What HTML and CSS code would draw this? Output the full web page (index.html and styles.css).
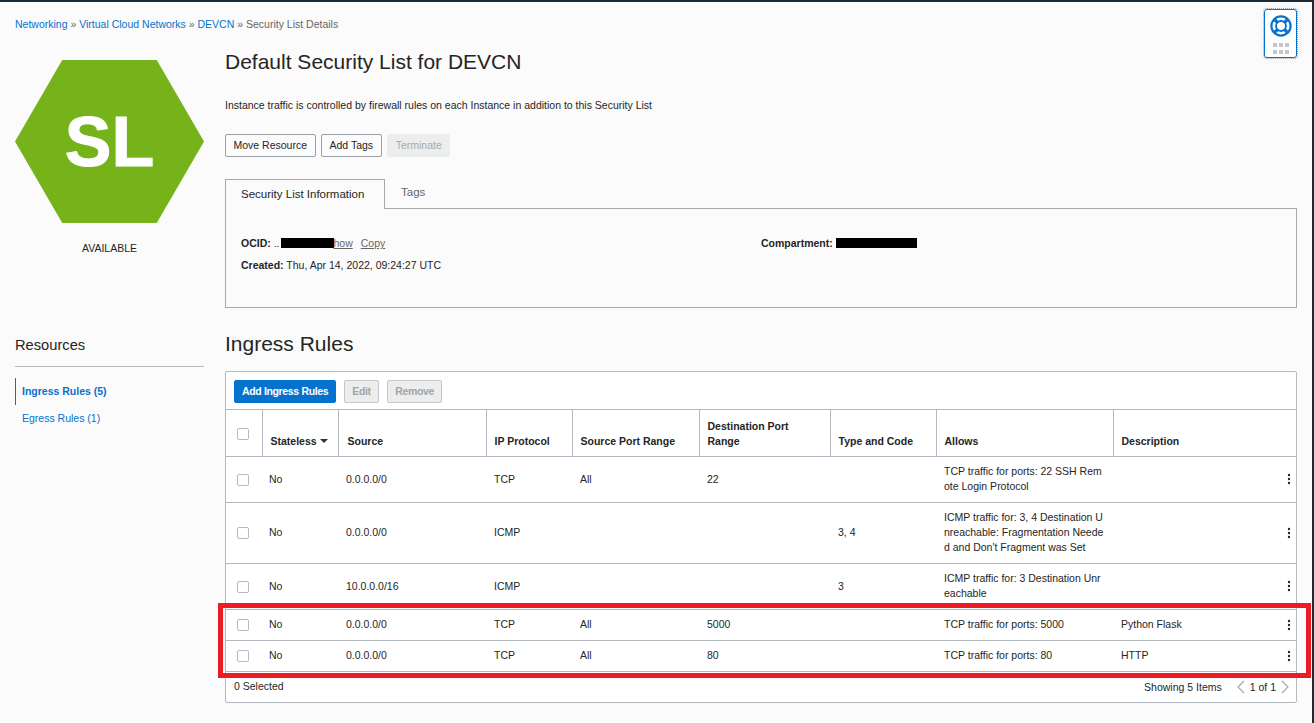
FILE: index.html
```html
<!DOCTYPE html>
<html>
<head>
  <meta charset="UTF-8">
  <title>Default Security List for DEVCN</title>
  <link rel="stylesheet" href="styles.css">
</head>
<body>
  <div class="frame">
    <div class="crumbs">
      <a href="#">Networking</a> <span class="sep">»</span>
      <a href="#">Virtual Cloud Networks</a> <span class="sep">»</span>
      <a href="#">DEVCN</a> <span class="sep">»</span>
      <span class="sep">Security List Details</span>
    </div>

    <div class="layout">
      <div class="side">
        <div class="hex">SL</div>
        <div class="state">AVAILABLE</div>
        <h3 class="side-title">Resources</h3>
        <a class="side-link active" href="#">Ingress Rules (5)</a>
        <a class="side-link" href="#">Egress Rules (1)</a>
      </div>

      <div class="main">
        <h1>Default Security List for DEVCN</h1>
        <p class="note">Instance traffic is controlled by firewall rules on each Instance in addition to this Security List</p>
        <div class="actions">
          <button class="btn">Move Resource</button>
          <button class="btn">Add Tags</button>
          <button class="btn disabled-flat">Terminate</button>
        </div>

        <div class="tabs">
          <div class="tab current">Security List Information</div>
          <div class="tab">Tags</div>
        </div>
        <div class="panel">
          <div class="info-col">
            <div class="info-line"><b>OCID:</b> ..<span class="redact short"></span><a class="minor" href="#">how</a><a class="minor copy" href="#">Copy</a></div>
            <div class="info-line"><b>Created:</b> Thu, Apr 14, 2022, 09:24:27 UTC</div>
          </div>
          <div class="info-col">
            <div class="info-line"><b>Compartment:</b> <span class="redact long"></span></div>
          </div>
        </div>

        <h2>Ingress Rules</h2>
        <div class="card">
          <div class="toolbar">
            <button class="btn primary">Add Ingress Rules</button>
            <button class="btn off">Edit</button>
            <button class="btn off">Remove</button>
          </div>
          <table>
            <colgroup>
              <col class="c-check"><col class="c-state"><col class="c-source"><col class="c-proto">
              <col class="c-sport"><col class="c-dport"><col class="c-type"><col class="c-allows">
              <col class="c-desc"><col class="c-menu">
            </colgroup>
            <thead>
              <tr>
                <th class="top-check"><span class="check"></span></th>
                <th>Stateless <span class="caret"></span></th>
                <th class="th-source">Source</th>
                <th>IP Protocol</th>
                <th>Source Port Range</th>
                <th>Destination Port Range</th>
                <th>Type and Code</th>
                <th>Allows</th>
                <th colspan="2">Description</th>
              </tr>
            </thead>
            <tbody>
              <tr class="r46">
                <td><span class="check"></span></td><td class="td-no">No</td><td>0.0.0.0/0</td><td>TCP</td><td>All</td><td>22</td><td></td>
                <td class="allows">TCP traffic for ports: 22 SSH Rem<br>ote Login Protocol</td><td></td>
                <td><svg class="kebab" viewBox="0 0 4 12"><circle cx="2" cy="2" r="1.2"/><circle cx="2" cy="6" r="1.2"/><circle cx="2" cy="10" r="1.2"/></svg></td>
              </tr>
              <tr class="r61">
                <td><span class="check"></span></td><td class="td-no">No</td><td>0.0.0.0/0</td><td>ICMP</td><td></td><td></td><td>3, 4</td>
                <td class="allows">ICMP traffic for: 3, 4 Destination U<br>nreachable: Fragmentation Neede<br>d and Don't Fragment was Set</td><td></td>
                <td><svg class="kebab" viewBox="0 0 4 12"><circle cx="2" cy="2" r="1.2"/><circle cx="2" cy="6" r="1.2"/><circle cx="2" cy="10" r="1.2"/></svg></td>
              </tr>
              <tr class="r46">
                <td><span class="check"></span></td><td class="td-no">No</td><td>10.0.0.0/16</td><td>ICMP</td><td></td><td></td><td>3</td>
                <td class="allows">ICMP traffic for: 3 Destination Unr<br>eachable</td><td></td>
                <td><svg class="kebab" viewBox="0 0 4 12"><circle cx="2" cy="2" r="1.2"/><circle cx="2" cy="6" r="1.2"/><circle cx="2" cy="10" r="1.2"/></svg></td>
              </tr>
              <tr class="r31">
                <td><span class="check"></span></td><td class="td-no">No</td><td>0.0.0.0/0</td><td>TCP</td><td>All</td><td>5000</td><td></td>
                <td class="allows">TCP traffic for ports: 5000</td><td>Python Flask</td>
                <td><svg class="kebab" viewBox="0 0 4 12"><circle cx="2" cy="2" r="1.2"/><circle cx="2" cy="6" r="1.2"/><circle cx="2" cy="10" r="1.2"/></svg></td>
              </tr>
              <tr class="r31">
                <td><span class="check"></span></td><td class="td-no">No</td><td>0.0.0.0/0</td><td>TCP</td><td>All</td><td>80</td><td></td>
                <td class="allows">TCP traffic for ports: 80</td><td>HTTP</td>
                <td><svg class="kebab" viewBox="0 0 4 12"><circle cx="2" cy="2" r="1.2"/><circle cx="2" cy="6" r="1.2"/><circle cx="2" cy="10" r="1.2"/></svg></td>
              </tr>
            </tbody>
          </table>
          <div class="foot">
            <span>0 Selected</span>
            <div class="pager">
              <span class="items">Showing 5 Items</span>
              <svg class="chev" viewBox="0 0 9 14"><path d="M8 1 2 7l6 6"/></svg>
              <span>1 of 1</span>
              <svg class="chev" viewBox="0 0 9 14"><path d="M1 1l6 6-6 6"/></svg>
            </div>
          </div>
        </div>
      </div>
    </div>

    <div class="help">
      <svg class="buoy" viewBox="0 0 24 24">
        <circle cx="12" cy="12" r="9.6" fill="none" stroke="#0572ce" stroke-width="2.2"/>
        <circle cx="12" cy="12" r="5" fill="none" stroke="#0572ce" stroke-width="1.8"/>
        <path d="M4.6 7 7 4.6l3 3.4L8 10zM19.4 7 17 4.6 14 8l2 2zM4.6 17 7 19.4l3-3.4L8 14zM19.4 17 17 19.4 14 16l2-2z" fill="#0572ce"/>
      </svg>
      <div class="grip"><i></i><i></i><i></i><i></i><i></i><i></i></div>
    </div>
    <div class="mark"></div>
  </div>
</body>
</html>
```

FILE: styles.css
```css
html, body {
  margin: 0;
  padding: 0;
}
body {
  width: 1314px;
  height: 723px;
  overflow: hidden;
  font-family: "Liberation Sans", Arial, sans-serif;
  font-size: 10.5px;
  color: #252525;
  background-color: #fbfbfb;
}
a {
  color: #0572ce;
  text-decoration: none;
}
.frame {
  position: relative;
  box-sizing: border-box;
  height: 723px;
  border-top: 2px solid #1c2a36;
  border-right: 2px solid #1c2a36;
}
.crumbs {
  height: 12px;
  line-height: 12px;
  padding: 16px 0 0 15px;
}
.sep {
  color: #666;
}
.layout {
  display: flex;
  padding-left: 15px;
}

/* left column */
.side {
  width: 189px;
  margin-right: 21px;
  padding-top: 30px;
}
.hex {
  height: 163px;
  display: flex;
  align-items: center;
  justify-content: center;
  background-color: #76b219;
  color: #fff;
  font-size: 70px;
  font-weight: bold;
  -webkit-text-stroke: 1px #fff;
  clip-path: polygon(25% 0, 75% 0, 100% 50%, 75% 100%, 25% 100%, 0 50%);
}
.state {
  margin-top: 19px;
  text-align: center;
  line-height: 12px;
}
.side-title {
  margin: 83px 0 0;
  padding-bottom: 12px;
  border-bottom: 1px solid #b4b9c2;
  font-size: 14.7px;
  font-weight: normal;
  line-height: 17px;
}
.side-link {
  display: block;
  height: 27px;
  line-height: 27px;
  padding-left: 7px;
}
.side-link.active {
  margin-top: 11px;
  border-left: 1px solid #0572ce;
  padding-left: 6px;
  font-weight: bold;
}

/* main column */
.main {
  width: 1072px;
}
h1, h2 {
  margin: 0;
  font-weight: normal;
  font-size: 21px;
}
h1 {
  padding-top: 16px;
  line-height: 32px;
}
.note {
  margin: 0;
  padding-top: 21px;
  line-height: 12px;
}
.actions {
  display: flex;
  gap: 5.5px;
  margin-top: 23px;
}
.btn {
  box-sizing: border-box;
  height: 23px;
  padding: 0 7.5px 1px;
  border: 1px solid #9a9ea6;
  border-radius: 2px;
  background-color: #fbfbfb;
  color: #252525;
  font-family: inherit;
  font-size: 10.5px;
}
.btn.disabled-flat {
  border-color: #eceded;
  background-color: #eceded;
  color: #aaa;
}
.btn.primary {
  padding: 0 7px 1px;
  border-color: #0572ce;
  background-color: #0572ce;
  color: #fff;
  font-weight: bold;
  letter-spacing: -0.35px;
}
.btn.off {
  border-color: #c4c6ca;
  background-color: #eceded;
  color: #a4a4a4;
  font-weight: bold;
  letter-spacing: -0.35px;
}
.tabs {
  display: flex;
  margin-top: 22px;
  height: 30px;
  margin-bottom: -1px;
  position: relative;
}
.tab {
  padding: 0 16px;
  line-height: 26px;
  font-size: 11.5px;
  color: #666;
}
.tab.current {
  width: 128px;
  padding: 0 15px;
  border: 1px solid #a6a9ae;
  border-bottom: 0;
  background-color: #fbfbfb;
  color: #252525;
  line-height: 28px;
}
.panel {
  box-sizing: border-box;
  display: flex;
  height: 100px;
  padding: 23px 15px 0;
  border: 1px solid #a6a9ae;
}
.info-col {
  width: 520px;
}
.info-line {
  height: 22px;
  line-height: 22px;
}
.redact {
  display: inline-block;
  height: 10px;
  background-color: #000;
  vertical-align: -1px;
}
.redact.short {
  width: 53px;
  margin-left: 1px;
}
.redact.long {
  width: 81px;
}
.minor {
  color: #666;
  text-decoration: underline;
}
.copy {
  margin-left: 8px;
}
h2 {
  margin-top: 24px;
  line-height: 24px;
}

/* rules table */
.card {
  box-sizing: border-box;
  height: 332px;
  margin-top: 15px;
  border: 1px solid #b4b9c2;
  border-radius: 2px;
  background-color: #fff;
}
.toolbar {
  display: flex;
  gap: 7.5px;
  height: 38px;
  box-sizing: border-box;
  padding: 8px 8px 0;
  border-bottom: 1px solid #b4b9c2;
}
table {
  width: 100%;
  table-layout: fixed;
  border-collapse: collapse;
}
.c-check { width: 36px; }
.c-state { width: 76px; }
.c-source { width: 148px; }
.c-proto { width: 86px; }
.c-sport { width: 127px; }
.c-dport { width: 131px; }
.c-type { width: 106px; }
.c-allows { width: 177px; }
.c-desc { width: 155px; }
.c-menu { width: 28px; }
thead tr {
  height: 46px;
}
th {
  padding: 0 8px 7px;
  border-left: 1px solid #b4b9c2;
  border-bottom: 1px solid #b4b9c2;
  font-weight: bold;
  text-align: left;
  vertical-align: bottom;
  line-height: 15px;
}
th:first-child {
  border-left: 0;
}
.th-source {
  padding-left: 9px;
}
.top-check {
  vertical-align: top;
  padding-top: 18px;
}
td {
  padding: 0 8px;
  border-bottom: 1px solid #b4b9c2;
  line-height: 15px;
}
td:first-child {
  padding-left: 11px;
}
td .check {
  margin-top: 1px;
}
td.td-no {
  padding-left: 7px;
}
.r46 { height: 46px; }
.r61 { height: 61px; }
.r31 { height: 31px; }
.check {
  display: block;
  box-sizing: border-box;
  width: 12px;
  height: 12px;
  border: 1px solid #b4b9c2;
  border-radius: 2px;
  background-color: #fff;
}
.top-check .check {
  margin-left: 3px;
}
.caret {
  display: inline-block;
  border: 4px solid transparent;
  border-top: 4px solid #333;
  border-bottom: 0;
  vertical-align: 2px;
}
.kebab {
  display: block;
  width: 4px;
  height: 12px;
  margin-left: 11px;
  fill: #252525;
}
.foot {
  display: flex;
  justify-content: space-between;
  padding: 8px 6px 0 8px;
  line-height: 12px;
}
.pager {
  display: flex;
  align-items: center;
  gap: 5px;
}
.items {
  margin-right: 9px;
}
.chev {
  width: 9px;
  height: 14px;
  fill: none;
  stroke: #a6a9ae;
  stroke-width: 1.2;
}

/* help widget */
.help {
  position: absolute;
  top: 7px;
  left: 1264px;
  box-sizing: border-box;
  width: 33px;
  height: 49px;
  padding-top: 4px;
  border: 1px solid #0572ce;
  border-radius: 3px;
  outline: 1px dotted #8fa3b5;
  background-color: #fff;
  box-shadow: 0 0 10px rgba(0, 0, 0, 0.06);
}
.buoy {
  display: block;
  width: 24px;
  height: 24px;
  margin: 0 auto;
}
.grip {
  display: grid;
  grid-template-columns: repeat(3, 4px);
  gap: 3px 2px;
  justify-content: center;
  margin-top: 5px;
}
.grip i {
  height: 4px;
  background-color: #c4c6ca;
}

/* red annotation drawn over the screenshot */
.mark {
  position: absolute;
  top: 601px;
  left: 218px;
  box-sizing: border-box;
  width: 1093px;
  height: 75px;
  border: 5px solid #ed1c24;
}
```
